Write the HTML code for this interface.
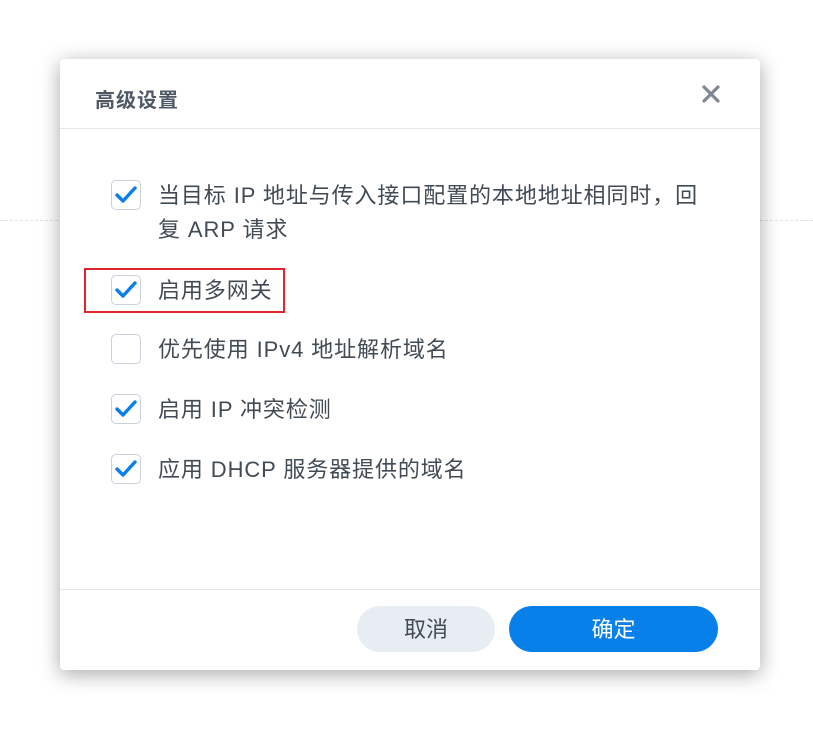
<!DOCTYPE html>
<html><head><meta charset="utf-8"><style>
*{margin:0;padding:0;box-sizing:border-box}
body{width:813px;height:733px;background:#fff;position:relative;overflow:hidden;font-family:"Liberation Sans","Noto Sans CJK SC",sans-serif;color:#414b55}
.dash{position:absolute;top:220px;left:0;width:813px;border-top:1px dashed #dde3ea}
.dlg{position:absolute;left:60px;top:59px;width:700px;height:611px;background:#fff;border-radius:4px;box-shadow:0 4px 20px rgba(0,0,0,.35)}
.title{position:absolute;left:35px;top:25px;font-size:20px;font-weight:bold;color:#4e5965;letter-spacing:1px}
.x{position:absolute;left:640px;top:24px;width:22px;height:22px}
.hl{position:absolute;left:0;right:0;top:69px;border-top:1px solid #e3e8ee}
.fl{position:absolute;left:0;right:0;top:530px;border-top:1px solid #e3e8ee}
.cb{position:absolute;left:51px;width:30px;height:30px;border:1.5px solid #c9d1da;border-radius:5px;background:#fff}
.cb svg{position:absolute;left:3px;top:4px}
.t{position:absolute;left:98px;font-size:22px;line-height:34px;color:#414b55;white-space:nowrap;letter-spacing:0.9px}
.red{position:absolute;left:24px;top:209px;width:201px;height:45px;border:2px solid #e0262d}
.btn{position:absolute;top:547px;height:46px;border-radius:23px;font-size:22px;line-height:48px;text-align:center}
</style></head><body>
<div class="dash"></div>
<div class="dlg">
<div class="title">高级设置</div>
<svg class="x" viewBox="0 0 22 22"><path d="M4 4L18 18M18 4L4 18" stroke="#7f8891" stroke-width="3.2" stroke-linecap="round"/></svg>
<div class="hl"></div>
<div class="cb" style="top:121px"><svg width="22" height="20" viewBox="0 0 22 20"><path d="M2 10L8 16L20 3" fill="none" stroke="#0a7ee9" stroke-width="3.4" stroke-linecap="round" stroke-linejoin="round"/></svg></div>
<div class="t" style="top:120px">当目标 IP 地址与传入接口配置的本地地址相同时，回<br>复 ARP 请求</div>
<div class="red"></div>
<div class="cb" style="top:216px"><svg width="22" height="20" viewBox="0 0 22 20"><path d="M2 10L8 16L20 3" fill="none" stroke="#0a7ee9" stroke-width="3.4" stroke-linecap="round" stroke-linejoin="round"/></svg></div>
<div class="t" style="top:215px">启用多网关</div>
<div class="cb" style="top:275px"></div>
<div class="t" style="top:274px">优先使用 IPv4 地址解析域名</div>
<div class="cb" style="top:335px"><svg width="22" height="20" viewBox="0 0 22 20"><path d="M2 10L8 16L20 3" fill="none" stroke="#0a7ee9" stroke-width="3.4" stroke-linecap="round" stroke-linejoin="round"/></svg></div>
<div class="t" style="top:334px">启用 IP 冲突检测</div>
<div class="cb" style="top:395px"><svg width="22" height="20" viewBox="0 0 22 20"><path d="M2 10L8 16L20 3" fill="none" stroke="#0a7ee9" stroke-width="3.4" stroke-linecap="round" stroke-linejoin="round"/></svg></div>
<div class="t" style="top:394px">应用 DHCP 服务器提供的域名</div>
<div class="fl"></div>
<div class="btn" style="left:297px;width:138px;background:#e8edf3;color:#414b55">取消</div>
<div class="btn" style="left:449px;width:209px;background:#0780ea;color:#fff">确定</div>
</div>
</body></html>
